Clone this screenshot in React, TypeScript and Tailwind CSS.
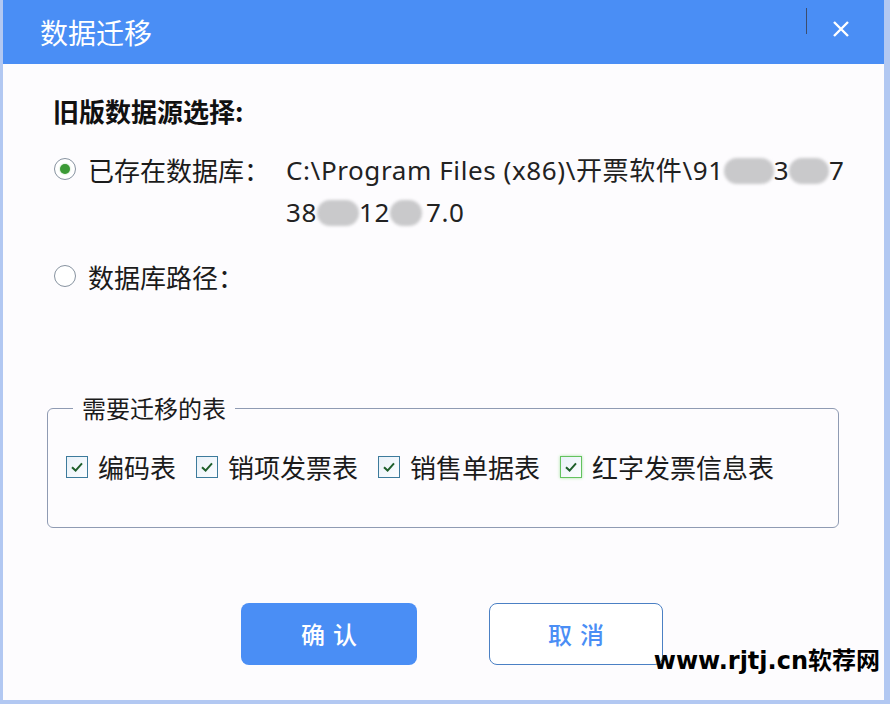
import React from "react";

const cjk = { fontFamily: '"Noto Sans CJK SC", "Noto Sans", sans-serif' };
const path = { fontFamily: '"Noto Sans", "Noto Sans CJK SC", sans-serif' };

function Blob({ w }: { w: number }) {
  return (
    <span
      className="inline-block h-[26px] align-middle rounded-full bg-[#c9c9cb] blur-[1.5px] -translate-y-[2px]"
      style={{ width: w }}
    />
  );
}

function Radio({ checked }: { checked?: boolean }) {
  return (
    <span className="flex items-center justify-center w-[22px] h-[22px] rounded-full border border-[#8793a0] bg-white shrink-0">
      {checked && <span className="w-[10px] h-[10px] rounded-full bg-[#3b9a35] shadow-[0_0_2px_#9fd49a]" />}
    </span>
  );
}

function Check({ label, hover }: { label: string; hover?: boolean }) {
  return (
    <div className="flex items-center">
      <span
        className={
          "flex items-center justify-center w-[22px] h-[22px] border-[1.5px] bg-gradient-to-br from-[#e9f1f8] to-[#fbfdff] " +
          (hover ? "border-[#63c25f] shadow-[0_0_3px_#a7e3a2]" : "border-[#3d7b9c]")
        }
      >
        <svg width="14" height="12" viewBox="0 0 14 12">
          <path d="M2 6.2 L5.6 9.6 L12 2.4" fill="none" stroke="#1d5e2a" strokeWidth="2" />
        </svg>
      </span>
      <span className="ml-[10px] text-[26px] leading-[30px] text-[#1b1b1b]">{label}</span>
    </div>
  );
}

export default function App() {
  return (
    <div
      className="relative w-[890px] h-[704px] bg-[#b2c8f2] pl-[3px] pr-[6px] pb-[4px] overflow-hidden"
      style={cjk}
    >
      <div className="flex flex-col h-full bg-[#fdfcfe]">
        <div className="flex items-center h-[64px] bg-[#4a8ef5] shrink-0">
          <span className="pl-[37px] text-[28px] text-white leading-none">数据迁移</span>
          <div className="ml-auto self-start mt-[8px] w-px h-[26px] bg-[#3c4d6e]" />
          <svg className="ml-[25px] mr-[34px] -translate-y-[3px]" width="18" height="18" viewBox="0 0 18 18">
            <path d="M2 2 L16 16 M16 2 L2 16" stroke="white" strokeWidth="2.4" />
          </svg>
        </div>

        <div className="pl-[50px] mt-[33px] text-[26px] leading-[28px] font-bold text-[#111]">旧版数据源选择:</div>

        <div className="flex mt-[23px] pl-[51px]">
          <div className="flex items-center h-[42px]">
            <Radio checked />
            <span className="ml-[12px] text-[26px] text-[#1b1b1b]">已存在数据库：</span>
          </div>
          <div className="ml-[16px] text-[26px] leading-[42px] text-[#222] tracking-[0.6px]" style={path}>
            <div className="whitespace-nowrap">
              C:\Program Files (x86)\<span style={cjk}>开票软件</span>\91
              <Blob w={50} />3<Blob w={40} />7
            </div>
            <div className="whitespace-nowrap">
              38<Blob w={42} />12<Blob w={32} />
              <span className="ml-[4px]">7.0</span>
            </div>
          </div>
        </div>

        <div className="flex items-center h-[42px] mt-[22px] pl-[51px]">
          <Radio />
          <span className="ml-[12px] text-[26px] text-[#1b1b1b]">数据库路径：</span>
        </div>

        <div className="relative mt-[111px] ml-[44px] w-[792px] h-[120px] border border-[#8f9bb3] rounded-[6px]">
          <span className="absolute -top-[16px] left-[25px] px-[9px] bg-[#fdfcfe] text-[24px] leading-[30px] text-[#1b1b1b]">
            需要迁移的表
          </span>
          <div className="flex items-center gap-[20px] pl-[18px] pt-[43px]">
            <Check label="编码表" />
            <Check label="销项发票表" />
            <Check label="销售单据表" />
            <Check label="红字发票信息表" hover />
          </div>
        </div>

        <div className="flex gap-[72px] ml-[238px] mt-[75px]">
          <button className="w-[176px] h-[62px] rounded-[8px] bg-[#4a8ef5] text-white text-[24px] font-medium tracking-[8px] pl-[8px]">
            确认
          </button>
          <button className="w-[174px] h-[62px] rounded-[8px] border-[1.5px] border-[#4b80c4] bg-white text-[#4a8ef5] text-[24px] font-medium tracking-[8px] pl-[8px]">
            取消
          </button>
        </div>
      </div>

      <span
        className="absolute right-[10px] top-[641px] text-[24px] font-bold text-black leading-[36px]"
        style={{ fontFamily: '"DejaVu Sans", "Noto Sans CJK SC", sans-serif' }}
      >
        www.rjtj.cn<span style={cjk}>软荐网</span>
      </span>
    </div>
  );
}
